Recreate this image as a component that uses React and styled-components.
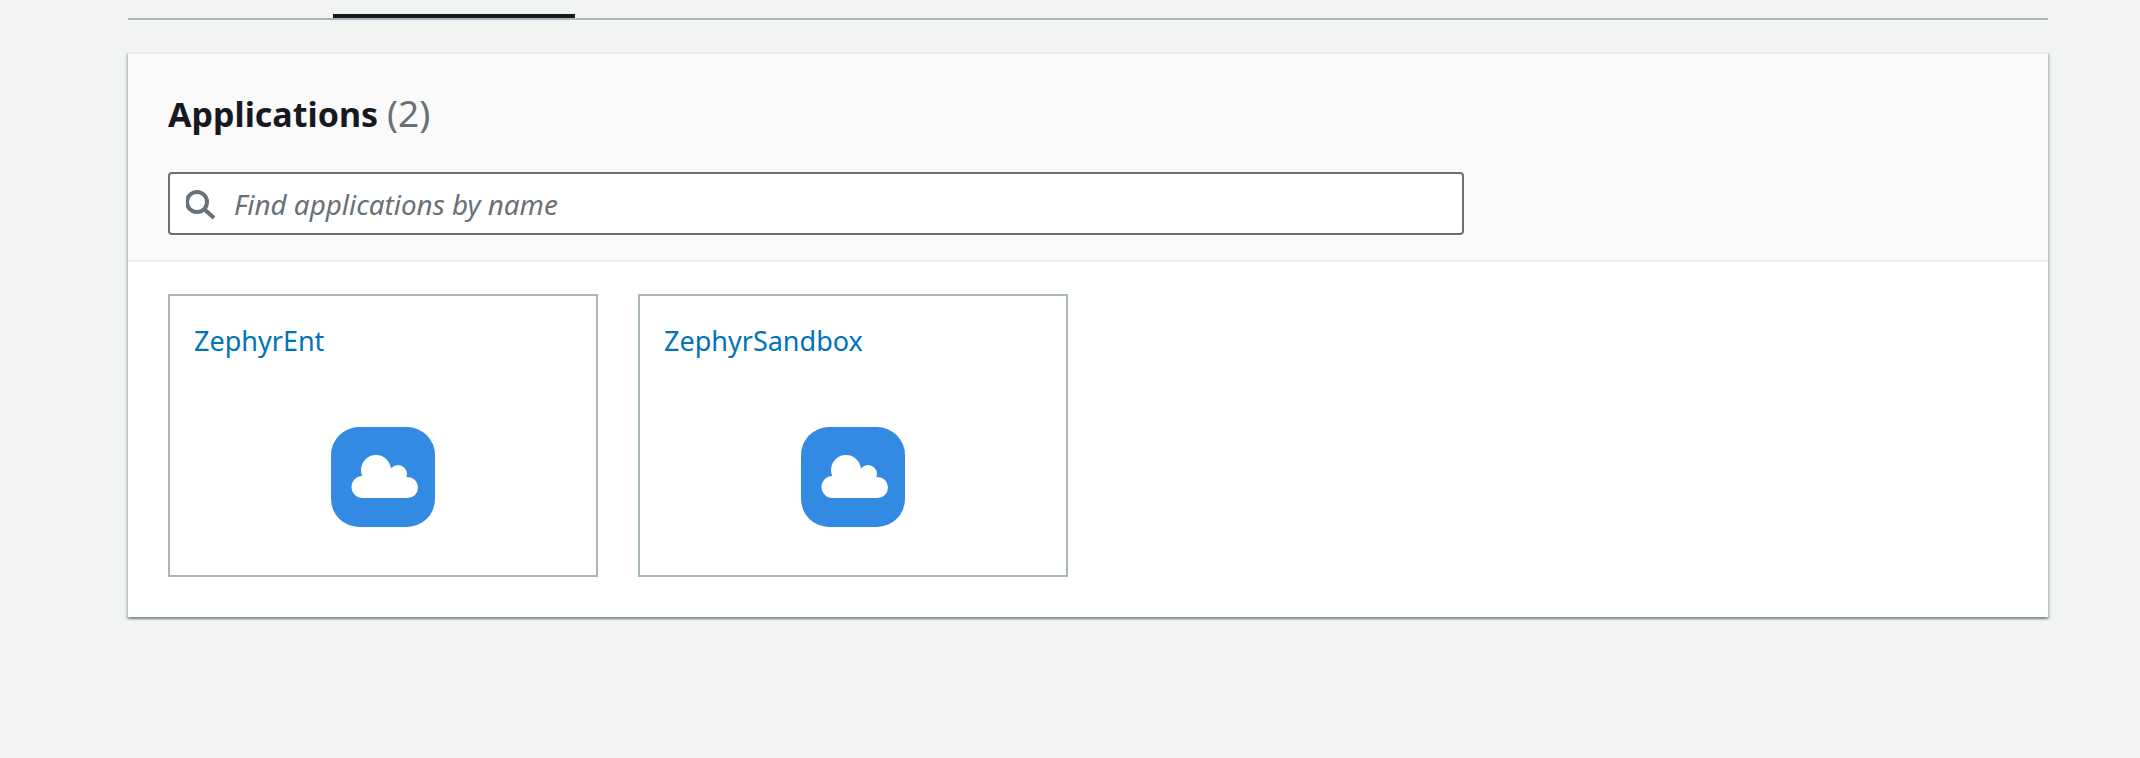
import styled, { createGlobalStyle } from "styled-components";

const GlobalStyle = createGlobalStyle`
  html, body {
    margin: 0;
    padding: 0;
    background: #f2f3f3;
    font-family: "Noto Sans", "Open Sans", sans-serif;
  }
`;

const apps = ["ZephyrEnt", "ZephyrSandbox"];

const SearchIcon = () => (
  <svg width="32" height="32" viewBox="0 0 32 32" fill="none" stroke="#687078" strokeWidth="4">
    <circle cx="11" cy="14" r="10" />
    <path d="M18 21 L28 30" />
  </svg>
);

const CloudIcon = () => (
  <svg width="104" height="100" viewBox="0 0 104 100">
    <rect width="104" height="100" rx="28" fill="#338ae2" />
    <g fill="#fff">
      <circle cx="31.5" cy="60" r="11" />
      <circle cx="45" cy="43" r="15" />
      <circle cx="67" cy="47" r="9" />
      <circle cx="76.5" cy="60.5" r="10.5" />
      <circle cx="58" cy="55" r="12" />
      <rect x="31" y="52" width="46" height="19" />
    </g>
  </svg>
);

const App = () => {
  return (
    <Page>
      <GlobalStyle />
      <TabBar>
        <ActiveTab />
      </TabBar>
      <Panel>
        <PanelHeader>
          <Title>
            Applications <Count>(2)</Count>
          </Title>
          <SearchBox>
            <SearchIcon />
            <SearchInput readOnly placeholder="Find applications by name" />
          </SearchBox>
        </PanelHeader>
        <PanelBody>
          {apps.map((name) => (
            <AppCard key={name}>
              <AppName href="#">{name}</AppName>
              <IconSlot>
                <CloudIcon />
              </IconSlot>
            </AppCard>
          ))}
        </PanelBody>
      </Panel>
    </Page>
  );
};

const Page = styled.div`
  box-sizing: border-box;
  height: 758px;
  padding: 0 92px 0 128px;
  overflow: hidden;
`;

const TabBar = styled.div`
  display: flex;
  height: 18px;
  padding-left: 205px;
  border-bottom: 2px solid #aab7b8;
`;

const ActiveTab = styled.div`
  box-sizing: border-box;
  width: 242px;
  height: 18px;
  border-bottom: 4px solid #16191f;
`;

const Panel = styled.section`
  margin-top: 32px;
  background: #fff;
  border-top: 2px solid #eaeded;
  box-shadow: 0 2px 2px 0 rgba(0, 28, 36, 0.3), 2px 2px 2px 0 rgba(0, 28, 36, 0.15),
    -2px 2px 2px 0 rgba(0, 28, 36, 0.15);
`;

const PanelHeader = styled.header`
  box-sizing: border-box;
  height: 208px;
  padding: 34px 40px 0;
  background: #fafafa;
  border-bottom: 2px solid #eaeded;
`;

const Title = styled.h2`
  margin: 0;
  height: 50px;
  font-size: 34px;
  line-height: 50px;
  font-weight: 700;
  color: #16191f;
`;

const Count = styled.span`
  font-size: 37px;
  font-weight: 400;
  color: #687078;
`;

const SearchBox = styled.div`
  box-sizing: border-box;
  display: flex;
  align-items: center;
  gap: 16px;
  width: 1296px;
  height: 63px;
  margin-top: 34px;
  padding: 0 16px;
  background: #fff;
  border: 2px solid #687078;
  border-radius: 4px;
`;

const SearchInput = styled.input`
  flex: 1;
  border: none;
  outline: none;
  padding: 0;
  background: transparent;
  font-family: inherit;
  font-size: 27.8px;
  font-style: italic;
  color: #16191f;

  &::placeholder {
    color: #687078;
    opacity: 1;
  }
`;

const PanelBody = styled.div`
  display: flex;
  gap: 40px;
  padding: 32px 40px 40px;
`;

const AppCard = styled.article`
  box-sizing: border-box;
  display: flex;
  flex-direction: column;
  width: 430px;
  height: 283px;
  padding: 25px 24px 0;
  border: 2px solid #aab7b8;
`;

const AppName = styled.a`
  font-size: 27px;
  line-height: 40px;
  color: #0073bb;
  text-decoration: none;
`;

const IconSlot = styled.div`
  display: flex;
  justify-content: center;
  margin-top: 66px;
`;

export default App;
